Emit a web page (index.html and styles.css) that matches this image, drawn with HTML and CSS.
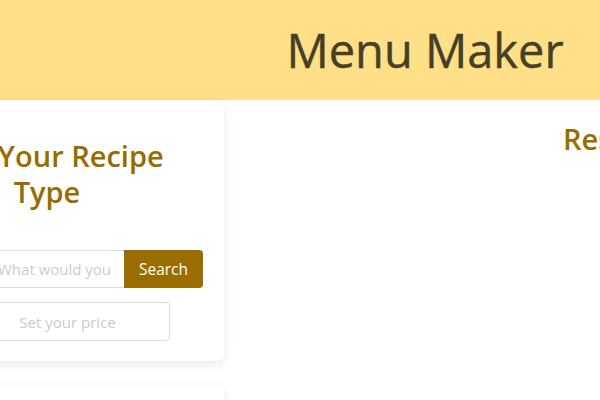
FILE: index.html
```html
<!DOCTYPE html>
<html>
<head>
<meta charset="utf-8">
<link rel="stylesheet" href="styles.css">
</head>
<body>
<header class="top">
  <h1 class="title">Menu Maker</h1>
</header>
<main class="layout">
  <aside class="side">
    <section class="card">
      <h2 class="card-title">Find Your Recipe<br>Type</h2>
      <form class="search-row">
        <input class="search-input" type="text" placeholder="What would you like to cook?">
        <button class="search-btn" type="button">Search</button>
      </form>
      <input class="price-input" type="text" placeholder="Set your price">
    </section>
    <section class="card card-empty"></section>
  </aside>
  <section class="results">
    <h2 class="results-title">Results</h2>
  </section>
</main>
</body>
</html>
```
FILE: styles.css
```css
html, body {
  margin: 0;
  padding: 0;
  overflow: hidden;
  background: #ffffff;
  font-family: "Open Sans", "Noto Sans", sans-serif;
}
.top {
  height: 100px;
  background: #ffdf88;
  display: flex;
  align-items: center;
  justify-content: center;
  padding-left: 250px;
}
.title {
  margin: 0;
  font-size: 47px;
  font-weight: 400;
  color: #463f25;
  line-height: 1;
  -webkit-text-stroke: 0.4px #463f25;
}
.layout {
  display: flex;
  margin-left: -130px;
  gap: 40px;
}
.side {
  width: 354px;
  flex: none;
  display: flex;
  flex-direction: column;
  gap: 24px;
  padding-top: 1px;
}
.card {
  background: #fff;
  border-radius: 7px;
  box-shadow: 0 3px 12px rgba(0,0,0,0.09);
  padding: 20px;
  display: flex;
  flex-direction: column;
  align-items: flex-end;
}
.card-title {
  align-self: stretch;
  margin: 17px 0 40px;
  text-align: center;
  font-size: 29px;
  line-height: 36px;
  font-weight: 600;
  color: #986c00;
}
.search-row {
  display: flex;
  margin: 0 1px 0 0;
  width: 218px;
}
.search-input {
  box-sizing: border-box;
  flex: 1;
  min-width: 0;
  height: 38px;
  border: 1px solid #dcdcdc;
  border-right: none;
  border-radius: 3px 0 0 3px;
  padding: 0 12px;
  font: inherit;
  font-size: 15px;
  color: #444;
}
.search-btn {
  width: 79px;
  height: 38px;
  border: none;
  border-radius: 0 4px 4px 0;
  background: #996d00;
  color: #fff;
  font: inherit;
  font-size: 15.5px;
}
.price-input {
  box-sizing: border-box;
  width: 205px;
  height: 39px;
  margin: 14px 34px 0 0;
  border: 1px solid #dcdcdc;
  border-radius: 4px;
  text-align: center;
  font: inherit;
  font-size: 15px;
}
::placeholder {
  color: #cccccc;
}
.card-empty {
  height: 60px;
}
.results {
  flex: 1;
}
.results-title {
  margin: 21px 0 0;
  padding-left: 299px;
  white-space: nowrap;
  font-size: 29px;
  line-height: 36px;
  font-weight: 600;
  color: #986c00;
}
```
